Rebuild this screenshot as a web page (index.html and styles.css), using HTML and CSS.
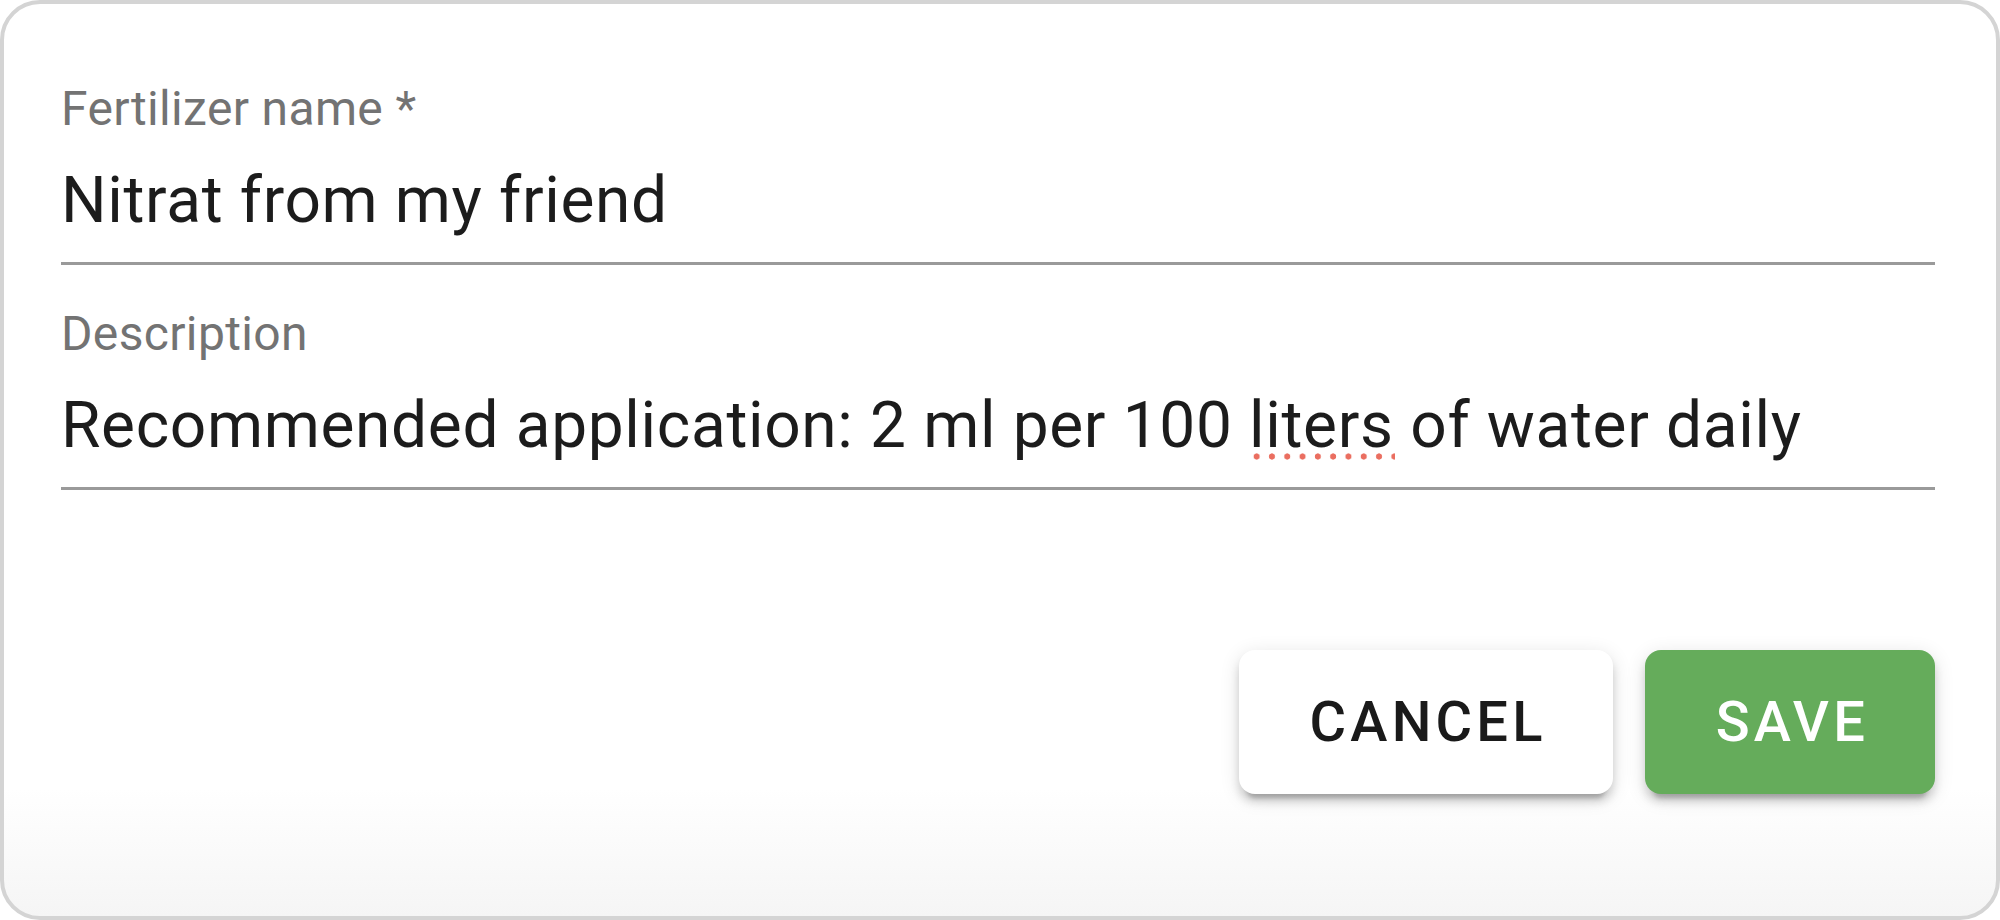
FILE: index.html
```html
<!DOCTYPE html>
<html lang="en">
<head>
<meta charset="utf-8">
<title>Edit fertilizer</title>
<link rel="stylesheet" href="styles.css">
</head>
<body>
  <div class="card">
    <form class="form">
      <div class="field">
        <label class="field-label">Fertilizer name *</label>
        <div class="field-input">Nitrat from my friend</div>
      </div>
      <div class="field">
        <label class="field-label">Description</label>
        <div class="field-input">Recommended application: 2 ml per 100 <span class="misspelled">liters</span> of water daily</div>
      </div>
      <div class="actions">
        <button type="button" class="btn btn-cancel">CANCEL</button>
        <button type="button" class="btn btn-save">SAVE</button>
      </div>
    </form>
  </div>
</body>
</html>
```

FILE: styles.css
```css
* {
  box-sizing: border-box;
}

html, body {
  margin: 0;
  padding: 0;
  background: #ffffff;
}

body {
  width: 2000px;
  height: 920px;
  font-family: Roboto, "Liberation Sans", sans-serif;
  overflow: hidden;
}

.card {
  width: 2000px;
  height: 920px;
  border: 4px solid #d4d4d4;
  border-radius: 40px;
  background: linear-gradient(to bottom, #ffffff 0%, #ffffff 86%, #f5f5f5 100%);
  padding: 77px 61px 0 57px;
}

.form {
  display: flex;
  flex-direction: column;
}

.field {
  display: flex;
  flex-direction: column;
  margin-bottom: 41px;
}

.field-label {
  font-size: 48px;
  line-height: 56px;
  color: #737373;
  letter-spacing: 0.35px;
  margin-bottom: 26px;
}

.field-input {
  font-size: 64px;
  line-height: 76px;
  color: #1c1c1c;
  letter-spacing: 0.65px;
  padding-bottom: 23px;
  border-bottom: 3px solid #9a9a9a;
  white-space: nowrap;
}

.misspelled {
  position: relative;
}

.misspelled::after {
  content: "";
  position: absolute;
  left: 0;
  right: -1px;
  top: calc(100% - 10px);
  height: 7px;
  background: radial-gradient(circle, #ea6e60 2.8px, rgba(234, 110, 96, 0) 3.4px) 0 0 / 15.3px 7px repeat-x;
}

.actions {
  display: flex;
  justify-content: flex-end;
  gap: 32px;
  margin-top: 119px;
}

.btn {
  height: 144px;
  border: none;
  border-radius: 16px;
  font-family: Roboto, "Liberation Sans", sans-serif;
  font-size: 56px;
  font-weight: 500;
  letter-spacing: 4.2px;
  padding: 0 66px 0 71px;
  cursor: pointer;
  box-shadow: 0 12px 4px -8px rgba(0, 0, 0, 0.2),
              0 8px 8px 0 rgba(0, 0, 0, 0.14),
              0 4px 20px 0 rgba(0, 0, 0, 0.12);
}

.btn-cancel {
  background: #ffffff;
  color: #1a1a1a;
}

.btn-save {
  background: #65ac5b;
  color: #ffffff;
}
```
